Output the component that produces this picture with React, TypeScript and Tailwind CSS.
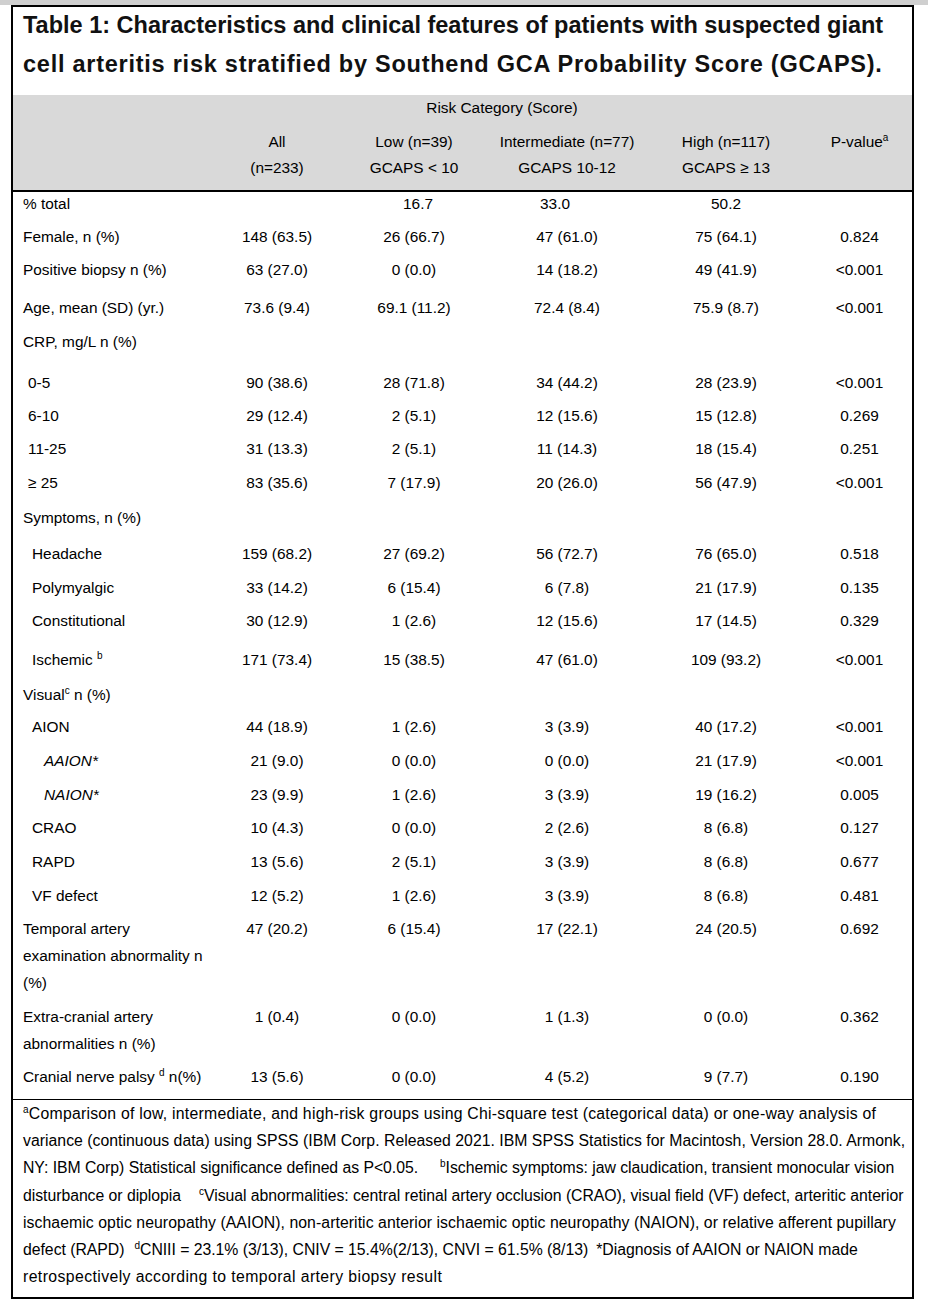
import type { ReactNode } from "react";

const cols = "grid grid-cols-[207px_114px_160px_146px_172px_100px]";

const Sup = ({ c }: { c: string }) => (
  <span className="relative top-[-6px] text-[10px] leading-none">{c}</span>
);

type Row = {
  label: ReactNode;
  h: number;
  ind?: string;
  lead?: string;
  vals?: string[];
  tweak?: string[];
};

const rows: Row[] = [
  { label: "% total", h: 31, lead: "leading-[24px]", vals: ["", "16.7", "33.0", "50.2", ""], tweak: ["", "pl-[8px]", "pr-[24px]", "", ""] },
  { label: "Female, n (%)", h: 33, vals: ["148 (63.5)", "26 (66.7)", "47 (61.0)", "75 (64.1)", "0.824"] },
  { label: "Positive biopsy n (%)", h: 38, vals: ["63 (27.0)", "0 (0.0)", "14 (18.2)", "49 (41.9)", "<0.001"] },
  { label: "Age, mean (SD) (yr.)", h: 34, vals: ["73.6 (9.4)", "69.1 (11.2)", "72.4 (8.4)", "75.9 (8.7)", "<0.001"] },
  { label: "CRP, mg/L n (%)", h: 41 },
  { label: "0-5", h: 33, ind: "pl-[15px]", vals: ["90 (38.6)", "28 (71.8)", "34 (44.2)", "28 (23.9)", "<0.001"] },
  { label: "6-10", h: 33, ind: "pl-[15px]", vals: ["29 (12.4)", "2 (5.1)", "12 (15.6)", "15 (12.8)", "0.269"] },
  { label: "11-25", h: 34, ind: "pl-[15px]", vals: ["31 (13.3)", "2 (5.1)", "11 (14.3)", "18 (15.4)", "0.251"] },
  { label: "≥ 25", h: 35, ind: "pl-[15px]", vals: ["83 (35.6)", "7 (17.9)", "20 (26.0)", "56 (47.9)", "<0.001"] },
  { label: "Symptoms, n (%)", h: 36 },
  { label: "Headache", h: 34, ind: "pl-[19px]", vals: ["159 (68.2)", "27 (69.2)", "56 (72.7)", "76 (65.0)", "0.518"] },
  { label: "Polymyalgic", h: 33, ind: "pl-[19px]", vals: ["33 (14.2)", "6 (15.4)", "6 (7.8)", "21 (17.9)", "0.135"] },
  { label: "Constitutional", h: 39, ind: "pl-[19px]", vals: ["30 (12.9)", "1 (2.6)", "12 (15.6)", "17 (14.5)", "0.329"] },
  {
    label: (
      <>
        Ischemic <Sup c="b" />
      </>
    ),
    h: 35,
    ind: "pl-[19px]",
    vals: ["171 (73.4)", "15 (38.5)", "47 (61.0)", "109 (93.2)", "<0.001"],
  },
  {
    label: (
      <>
        Visual<Sup c="c" /> n (%)
      </>
    ),
    h: 32,
  },
  { label: "AION", h: 34, ind: "pl-[19px]", vals: ["44 (18.9)", "1 (2.6)", "3 (3.9)", "40 (17.2)", "<0.001"] },
  { label: "AAION*", h: 34, ind: "pl-[31px] italic", vals: ["21 (9.0)", "0 (0.0)", "0 (0.0)", "21 (17.9)", "<0.001"] },
  { label: "NAION*", h: 33, ind: "pl-[31px] italic", vals: ["23 (9.9)", "1 (2.6)", "3 (3.9)", "19 (16.2)", "0.005"] },
  { label: "CRAO", h: 34, ind: "pl-[19px]", vals: ["10 (4.3)", "0 (0.0)", "2 (2.6)", "8 (6.8)", "0.127"] },
  { label: "RAPD", h: 34, ind: "pl-[19px]", vals: ["13 (5.6)", "2 (5.1)", "3 (3.9)", "8 (6.8)", "0.677"] },
  { label: "VF defect", h: 33, ind: "pl-[19px]", vals: ["12 (5.2)", "1 (2.6)", "3 (3.9)", "8 (6.8)", "0.481"] },
  {
    label: (
      <>
        Temporal artery
        <br />
        examination abnormality n
        <br />
        (%)
      </>
    ),
    h: 88,
    vals: ["47 (20.2)", "6 (15.4)", "17 (22.1)", "24 (20.5)", "0.692"],
  },
  {
    label: (
      <>
        Extra-cranial artery
        <br />
        abnormalities n (%)
      </>
    ),
    h: 60,
    vals: ["1 (0.4)", "0 (0.0)", "1 (1.3)", "0 (0.0)", "0.362"],
  },
  {
    label: (
      <>
        Cranial nerve palsy <Sup c="d" /> n(%)
      </>
    ),
    h: 36,
    vals: ["13 (5.6)", "0 (0.0)", "4 (5.2)", "9 (7.7)", "0.190"],
  },
];

// footnote lines, each with its own tracking so the line ends land where the scan has them
const footLines: { text: ReactNode; track: string }[] = [
  {
    track: "tracking-[0.24px]",
    text: (
      <>
        <Sup c="a" />
        Comparison of low, intermediate, and high-risk groups using Chi-square test (categorical data) or one-way analysis of
      </>
    ),
  },
  {
    track: "tracking-[0.02px]",
    text: <>variance (continuous data) using SPSS (IBM Corp. Released 2021. IBM SPSS Statistics for Macintosh, Version 28.0. Armonk,</>,
  },
  {
    track: "tracking-[-0.04px]",
    text: (
      <>
        NY: IBM Corp) Statistical significance defined as P&lt;0.05.
        <span className="inline-block w-[22px]" />
        <Sup c="b" />
        Ischemic symptoms: jaw claudication, transient monocular vision
      </>
    ),
  },
  {
    track: "tracking-[-0.04px]",
    text: (
      <>
        disturbance or diplopia
        <span className="inline-block w-[18px]" />
        <Sup c="c" />
        Visual abnormalities: central retinal artery occlusion (CRAO), visual field (VF) defect, arteritic anterior
      </>
    ),
  },
  {
    track: "tracking-[0.06px]",
    text: <>ischaemic optic neuropathy (AAION), non-arteritic anterior ischaemic optic neuropathy (NAION), or relative afferent pupillary</>,
  },
  {
    track: "tracking-[-0.03px]",
    text: (
      <>
        defect (RAPD)
        <span className="inline-block w-[10px]" />
        <Sup c="d" />
        CNIII = 23.1% (3/13), CNIV = 15.4%(2/13), CNVI = 61.5% (8/13)
        <span className="inline-block w-[8px]" />
        *Diagnosis of AAION or NAION made
      </>
    ),
  },
  { track: "tracking-[0.4px]", text: <>retrospectively according to temporal artery biopsy result</> },
];

export default function App() {
  return (
    <div className="w-[928px] h-[1306px] bg-white text-black font-['Liberation_Sans',Arial,sans-serif]">
      <div className="h-[5px] bg-[#cfcfcf]" />
      <div className="ml-[11px] w-[903px] border-2 border-black">
        {/* title */}
        <h1 className="-mt-[1px] pl-[10px] text-[23.5px] font-bold leading-[39px] text-[#111] whitespace-nowrap">
          <div>Table 1: Characteristics and clinical features of patients with suspected giant</div>
          <div className="tracking-[0.75px]">cell arteritis risk stratified by Southend GCA Probability Score (GCAPS).</div>
        </h1>

        {/* header band */}
        <div className="mt-[11px] bg-[#d9d9d9] text-[15.4px] leading-[26px] border-b-2 border-black">
          <div className={`${cols} h-[34px]`}>
            <div />
            <div className="col-span-4 text-center pr-[28px]">Risk Category (Score)</div>
            <div />
          </div>
          <div className={`${cols} h-[61px] text-center`}>
            <div />
            <div>
              All
              <br />
              (n=233)
            </div>
            <div>
              Low (n=39)
              <br />
              GCAPS &lt; 10
            </div>
            <div>
              Intermediate (n=77)
              <br />
              GCAPS 10-12
            </div>
            <div>
              High (n=117)
              <br />
              GCAPS ≥ 13
            </div>
            <div className="pr-[5px]">
              P-value<Sup c="a" />
            </div>
          </div>
        </div>

        {/* body */}
        <div className="text-[15.4px]">
          {rows.map((r, i) => (
            <div key={i} className={`${cols} ${r.lead ?? "leading-[27px]"}`} style={{ height: r.h }}>
              <div className={r.ind ?? "pl-[10px]"}>{r.label}</div>
              {(r.vals ?? ["", "", "", "", ""]).map((v, j) => (
                <div key={j} className={`text-center ${j === 4 ? "pr-[5px]" : ""} ${r.tweak?.[j] ?? ""}`}>
                  {v}
                </div>
              ))}
            </div>
          ))}
        </div>

        {/* footnotes */}
        <div className="border-t border-black pl-[10px] pb-[7px] text-[15.8px] leading-[27.2px]">
          {footLines.map((l, i) => (
            <div key={i} className={`whitespace-nowrap ${l.track}`}>
              {l.text}
            </div>
          ))}
        </div>
      </div>
    </div>
  );
}
